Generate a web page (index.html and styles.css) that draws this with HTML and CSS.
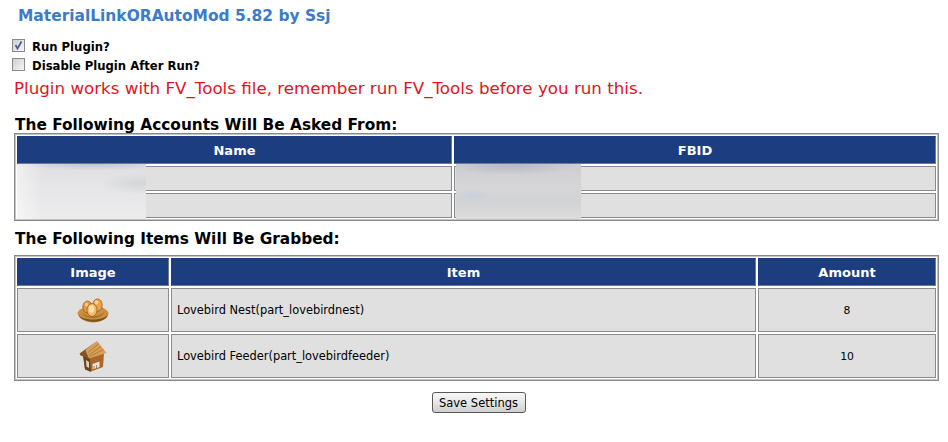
FILE: index.html
```html
<!DOCTYPE html>
<html lang="en">
<head>
<meta charset="utf-8">
<title>MaterialLinkORAutoMod</title>
<link rel="stylesheet" href="styles.css">
</head>
<body>
<h1 class="title">MaterialLinkORAutoMod 5.82 by Ssj</h1>
<div class="options">
  <label class="option">
    <span class="check">
      <svg viewBox="0 0 11 11" width="11" height="11"><path d="M2.500 5 L4.500 8.500 L8.500 1.500" fill="none" stroke="#4a5a94" stroke-width="1.700"/></svg>
    </span>
    Run Plugin?
  </label>
  <label class="option">
    <span class="check"></span>
    Disable Plugin After Run?
  </label>
</div>
<p class="notice">Plugin works with FV_Tools file, remember run FV_Tools before you run this.</p>

<h2 class="heading heading-first">The Following Accounts Will Be Asked From:</h2>
<div class="table-wrap">
  <table class="grid accounts">
    <tr><th class="c-name">Name</th><th>FBID</th></tr>
    <tr><td></td><td></td></tr>
    <tr><td></td><td></td></tr>
  </table>
  <div class="smudge smudge-name"></div>
  <div class="smudge smudge-id"></div>
</div>

<h2 class="heading">The Following Items Will Be Grabbed:</h2>
<table class="grid items">
  <tr><th class="c-img">Image</th><th>Item</th><th class="c-amt">Amount</th></tr>
  <tr>
    <td class="center">
      <svg class="icon" viewBox="0 0 32 25" width="32" height="25">
        <path d="M0.500 15 C2 11 5 11 8 9 L25 9 C27 11 31.500 12 31.500 15.500 C31 20 25 24.500 16 24.500 C8 24.500 1 20 0.500 15Z" fill="#c98f3f"/>
        <path d="M1.500 17 C7 23 25 23 31 17 C28 26 6 26 1.500 17Z" fill="#7d521c"/>
        <path d="M5 15 C9 20 23 20 27 14 C25 21.500 8 21.500 5 15Z" fill="#9a6424"/>
        <ellipse cx="10.500" cy="9" rx="4.700" ry="6" fill="#e8973a" stroke="#8c5a1e" stroke-width=".7"/>
        <ellipse cx="20.500" cy="7" rx="4.700" ry="6.200" fill="#eda247" stroke="#8c5a1e" stroke-width=".7"/>
        <ellipse cx="15" cy="12" rx="5" ry="6.500" fill="#f4b868" stroke="#8c5a1e" stroke-width=".7"/>
        <ellipse cx="14.500" cy="11" rx="2.700" ry="3.800" fill="#fde3b8"/>
        <ellipse cx="19.500" cy="4.500" rx="1.800" ry="2" fill="#f9d29c"/>
        <ellipse cx="9.500" cy="6.500" rx="1.600" ry="2" fill="#f6c88a"/>
      </svg>
    </td>
    <td>Lovebird Nest(part_lovebirdnest)</td>
    <td class="center">8</td>
  </tr>
  <tr>
    <td class="center">
      <svg class="icon" viewBox="0 0 28 33" width="28" height="33">
        <path d="M4 15 L10 17 L25 13 L24 27 L12 31.500 L6 29Z" fill="#a8662a"/>
        <path d="M4 15 L11 19 L12 32 L6 29.500Z" fill="#6f4318"/>
        <path d="M7 20 L10 22 L10 28 L7.500 26.500Z" fill="#d8d4cc"/>
        <path d="M13.500 24 L20.500 21.500 L20.500 27 L13.500 29.500Z" fill="#ece4d4"/>
        <path d="M15 26 L15 29 M17.500 25 L17.500 28" stroke="#8a6a40" stroke-width=".8"/>
        <path d="M18 1 L27.500 13 L10 18.500 L6.500 10Z" fill="#d6a058"/>
        <path d="M18 1 L0.500 13.500 L1.500 15.500 L10 18.500 L6.500 10Z" fill="#8a5520"/>
        <path d="M20 3.500 L9 12.500 M22 6.500 L10 15 M24.500 9.500 L11 16.500" stroke="#ab732f" stroke-width=".8"/>
      </svg>
    </td>
    <td>Lovebird Feeder(part_lovebirdfeeder)</td>
    <td class="center">10</td>
  </tr>
</table>
<div class="actions"><button class="save" type="button">Save Settings</button></div>
</body>
</html>
```

FILE: styles.css
```css
html, body { margin: 0; padding: 0; background: #fff; }
body {
  width: 948px;
  height: 442px;
  overflow: hidden;
  font-family: "DejaVu Sans", Verdana, sans-serif;
  color: #000;
  box-sizing: border-box;
  padding-top: 7px;
}
.title {
  margin: 0 0 0 18px;
  font-size: 15.450px;
  line-height: 18px;
  font-weight: bold;
  color: #3b7cc9;
}
.options { margin: 12px 0 0 12px; }
.option {
  display: flex;
  align-items: center;
  gap: 7px;
  height: 19px;
  font-size: 11.650px;
  font-weight: bold;
}
.check {
  width: 13px;
  height: 13px;
  box-sizing: border-box;
  border: 1px solid #8a8a8a;
  background: linear-gradient(135deg, #cfcfcf, #f6f6f6);
  display: flex;
  position: relative;
  top: -1px;
}
.notice {
  margin: 3px 0 0 14px;
  font-size: 16.700px;
  line-height: 20px;
  color: #e0141e;
}
.heading {
  margin: 10px 0 0 15px;
  font-size: 15.350px;
  line-height: 16px;
  font-weight: bold;
  color: #000;
}
.heading-first { margin-top: 19px; }
.table-wrap { position: relative; }
.grid {
  display: table;
  margin: 0 0 0 14px;
  width: 925px;
  border: 1px solid #888;
  box-shadow: inset 0 0 0 1px #c4c4c4;
  border-spacing: 2px;
  border-collapse: separate;
  table-layout: fixed;
  font-size: 11.400px;
}
.grid th {
  box-sizing: border-box;
  background: #1c3d80;
  color: #fff;
  font-size: 13px;
  font-weight: bold;
  height: 28px;
  padding: 0;
  border: 1px solid #1c3d80;
  border-right-color: #6c7a96;
  border-bottom-color: #6c7a96;
  text-align: center;
}
.grid td {
  box-sizing: border-box;
  background: #e0e0e0;
  border: 1px solid #8a8a8a;
  padding: 0 0 0 5px;
}
.accounts td { height: 25px; }
.c-name { width: 435px; }
.items { margin-top: 8px; }
.items td { height: 44px; }
.c-img { width: 152px; }
.c-amt { width: 178px; }
.grid td.center { text-align: center; padding: 0; font-size: 10.800px; }
.icon { display: block; margin: 0 auto; }
.smudge {
  position: absolute;
  top: 31px;
  height: 55px;
}
.smudge-name {
  left: 17px;
  width: 129px;
  background:
    linear-gradient(90deg, rgba(255,255,255,.5), rgba(255,255,255,0) 20%),
    radial-gradient(ellipse 60% 12% at 60% 0%, #c0c5d2, rgba(192,197,210,0)),
    radial-gradient(ellipse 30% 20% at 95% 35%, #d4d6d8, rgba(212,214,216,0)),
    linear-gradient(#e0e0e2, #e6e6e8 50%, #ececec);
}
.smudge-id {
  left: 456px;
  width: 125px;
  background:
    radial-gradient(ellipse 50% 18% at 45% 2%, #b4b9c4, rgba(180,185,196,0)),
    radial-gradient(ellipse 14% 12% at 14% 58%, #c6d0dc, rgba(198,208,220,0)),
    linear-gradient(#cccdd1, #d6d6d8 40%, #d2d3d5 70%, #dcdcdc);
}
.actions { display: flex; justify-content: center; margin-top: 11px; padding-left: 9px; }
.save {
  width: 94px;
  height: 21px;
  padding: 0;
  font-family: "DejaVu Sans", Verdana, sans-serif;
  font-size: 11.500px;
  color: #000;
  border: 1px solid #5a5a5a;
  border-radius: 3px;
  background: linear-gradient(#f8f8f8, #e4e4e4 55%, #cfcfcf);
}
```
